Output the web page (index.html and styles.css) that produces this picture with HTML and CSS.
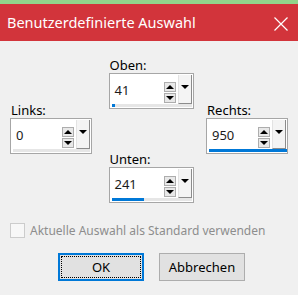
FILE: index.html
```html
<!DOCTYPE html>
<html lang="de">
<head>
    <meta charset="UTF-8">
    <title>Benutzerdefinierte Auswahl</title>
    <link rel="stylesheet" href="styles.css">
</head>
<body>
    <div class="window">
        <!-- Title bar -->
        <header class="titlebar">
            <span class="title">Benutzerdefinierte Auswahl</span>
            <svg class="close" width="14" height="14" viewBox="0 0 14 14">
                <path d="M0.5 0.5 L13.5 13.5 M13.5 0.5 L0.5 13.5" stroke="#fff" stroke-width="1.2" fill="none"/>
            </svg>
        </header>

        <main class="content">
            <div class="fields">
                <div class="col col-side">
                    <label class="label">Links:</label>
                    <div class="spin">
                        <div class="spin-row">
                            <span class="value">0</span>
                            <div class="arrows">
                                <span class="arrow up"></span>
                                <span class="arrow down"></span>
                            </div>
                            <span class="drop"></span>
                        </div>
                        <div class="bar"><div class="fill" style="width:0px"></div></div>
                    </div>
                </div>

                <div class="col col-mid">
                    <div class="group">
                        <label class="label">Oben:</label>
                        <div class="spin">
                            <div class="spin-row">
                                <span class="value">41</span>
                                <div class="arrows">
                                    <span class="arrow up"></span>
                                    <span class="arrow down"></span>
                                </div>
                                <span class="drop"></span>
                            </div>
                            <div class="bar"><div class="fill" style="width:3px"></div></div>
                        </div>
                    </div>
                    <div class="group group-bottom">
                        <label class="label">Unten:</label>
                        <div class="spin">
                            <div class="spin-row">
                                <span class="value">241</span>
                                <div class="arrows">
                                    <span class="arrow up"></span>
                                    <span class="arrow down"></span>
                                </div>
                                <span class="drop"></span>
                            </div>
                            <div class="bar"><div class="fill" style="width:32px"></div></div>
                        </div>
                    </div>
                </div>

                <div class="col col-side">
                    <label class="label">Rechts:</label>
                    <div class="spin">
                        <div class="spin-row">
                            <span class="value">950</span>
                            <div class="arrows">
                                <span class="arrow up"></span>
                                <span class="arrow down"></span>
                            </div>
                            <span class="drop"></span>
                        </div>
                        <div class="bar"><div class="fill" style="width:78px"></div></div>
                    </div>
                </div>
            </div>

            <!-- Default checkbox (disabled) -->
            <div class="check-row">
                <span class="checkbox"></span>
                <span class="check-text">Aktuelle Auswahl als Standard verwenden</span>
            </div>

            <div class="buttons">
                <button class="btn btn-default"><span class="focus">OK</span></button>
                <button class="btn">Abbrechen</button>
            </div>
        </main>
    </div>
</body>
</html>
```

FILE: styles.css
```css
body {
    margin: 0;
    font-family: "Noto Sans", "Open Sans", sans-serif;
    font-size: 13px;
    color: #000;
    background-color: #f0f0f0;
}
.window {
    width: 298px;
    height: 295px;
    background-color: #f0f0f0;
}
.titlebar {
    border-top: 4px solid #92d48b;
    height: 37px;
    background-color: #d2343b;
    display: flex;
    align-items: center;
    justify-content: space-between;
    padding: 0 10px 0 7px;
}
.title {
    color: #fff;
    font-size: 14.5px;
    margin-top: -2px;
}
.close {
    display: block;
    margin-top: 3px;
}
.content {
    padding: 16px 10px 0 10px;
}
.fields {
    display: flex;
    justify-content: space-between;
}
.col {
    display: flex;
    flex-direction: column;
}
.col-side {
    margin-top: 45px;
    width: 82px;
}
.col-mid {
    width: 85px;
    margin-left: 4px;
}
.group-bottom {
    margin-top: 42px;
}
.label {
    display: block;
    line-height: 16px;
    padding-left: 1px;
}
.spin {
    border: 1px solid #a6a6a6;
    background-color: #fff;
    padding: 1px 1px 1px 2px;
    display: flex;
    flex-direction: column;
}
.spin-row {
    height: 29px;
    display: flex;
    align-items: stretch;
}
.value {
    flex: 1;
    display: flex;
    align-items: center;
    padding-left: 3px;
    padding-top: 1px;
    color: #1b1b1b;
}
.arrows {
    width: 12px;
    display: flex;
    flex-direction: column;
    justify-content: flex-end;
    gap: 1px;
    padding-bottom: 1px;
    margin-right: 2px;
}
.arrow {
    border: 1px solid #adadad;
    background-color: #e8e8e8;
    display: flex;
    align-items: center;
    justify-content: center;
    box-sizing: border-box;
    height: 10px;
}
.arrow::after {
    content: "";
    border-left: 4px solid transparent;
    border-right: 4px solid transparent;
}
.arrow.up::after {
    border-bottom: 4px solid #000;
}
.arrow.down::after {
    border-top: 4px solid #000;
}
.drop {
    width: 14px;
    background-color: #f4f4f4;
    border-right: 1px solid #8c8c8c;
    border-bottom: 1px solid #8c8c8c;
    border-left: 1px solid #e3e3e3;
    box-sizing: border-box;
    display: flex;
    justify-content: center;
    padding-top: 10px;
}
.drop::after {
    content: "";
    width: 0;
    height: 0;
    border-left: 4px solid transparent;
    border-right: 4px solid transparent;
    border-top: 4px solid #000;
}
.bar {
    height: 3px;
    background-color: #e6e6e6;
}
.fill {
    height: 100%;
    background-color: #0078d7;
}
.check-row {
    display: flex;
    align-items: center;
    margin-top: 19px;
}
.checkbox {
    width: 13px;
    height: 13px;
    border: 1px solid #cccccc;
    background-color: #f7f7f7;
    margin-right: 5px;
}
.check-text {
    color: #8d8d8d;
    font-size: 12px;
}
.buttons {
    display: flex;
    justify-content: center;
    gap: 15px;
    margin-top: 14px;
    padding-left: 5px;
}
.btn {
    width: 86px;
    height: 28px;
    font-family: inherit;
    font-size: 13px;
    background-color: #e1e1e1;
    border: 1px solid #adadad;
    color: #000;
    padding: 0;
}
.btn-default {
    border: 2px solid #0078d7;
    padding: 1px;
}
.focus {
    display: flex;
    align-items: center;
    justify-content: center;
    height: 100%;
    border: 1px dotted #000;
    box-sizing: border-box;
}
```
